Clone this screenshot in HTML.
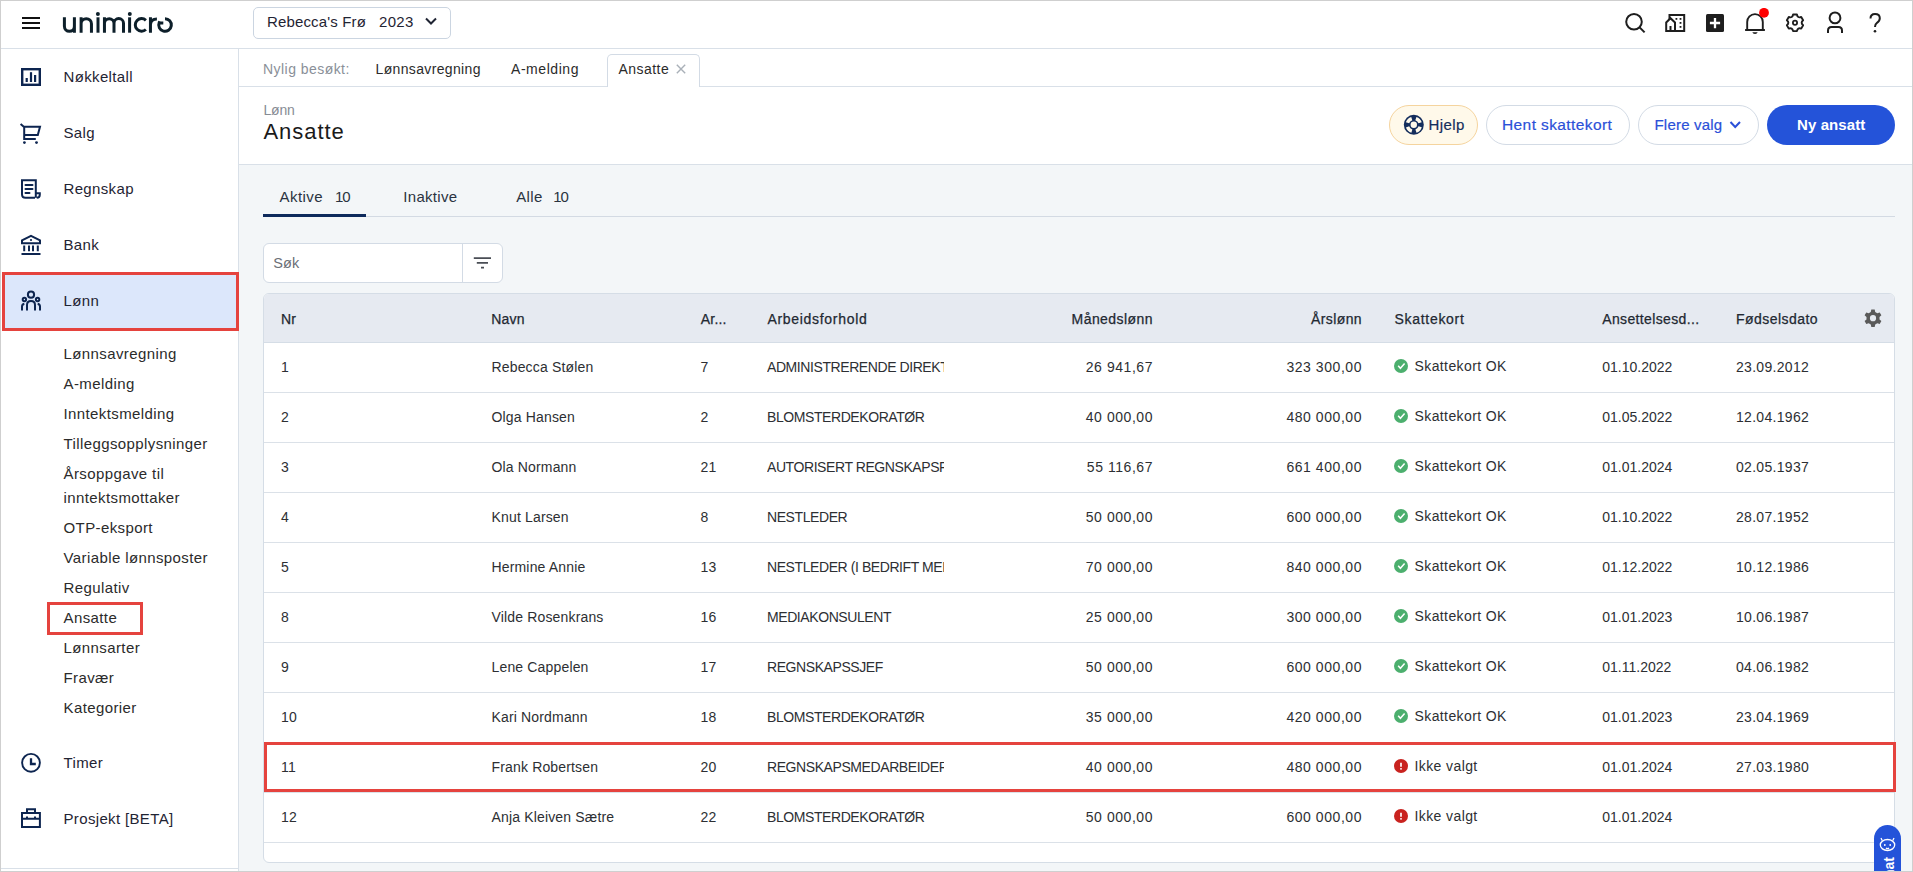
<!DOCTYPE html>
<html><head><meta charset="utf-8"><title>Ansatte</title>
<style>
html,body{margin:0;padding:0;}
body{width:1913px;height:872px;overflow:hidden;position:relative;background:#fff;font-family:"Liberation Sans", sans-serif;}
.t{position:absolute;white-space:nowrap;line-height:20px;height:20px;}
svg{display:block}
</style></head><body>
<div style="position:absolute;left:0;top:0;width:1913px;height:1px;background:#cfcfcf"></div><div style="position:absolute;left:0;top:0;width:1px;height:872px;background:#cfcfcf"></div><div style="position:absolute;left:1912px;top:0;width:1px;height:872px;background:#cfcfcf"></div><div style="position:absolute;left:0;top:871px;width:1913px;height:1px;background:#cfcfcf"></div><div style="position:absolute;left:1px;top:48px;width:1911px;height:1px;background:#d9e0e8"></div><div style="position:absolute;left:22px;top:17px;width:18px;height:2px;background:#111"></div><div style="position:absolute;left:22px;top:22px;width:18px;height:2px;background:#111"></div><div style="position:absolute;left:22px;top:27px;width:18px;height:2px;background:#111"></div><svg style="position:absolute;left:60px;top:8px" width="118" height="30" viewBox="60 8 118 30">
<g fill="none" stroke="#0d1f2a" stroke-width="3" stroke-linecap="butt">
<path d="M64.4 17.3 V26.3 A5 5 0 0 0 74.4 26.3 M74.4 17.3 V32.7"/>
<path d="M81.1 17.3 V32.7 M81.1 23.8 A5.17 5.17 0 0 1 91.45 23.8 V32.7"/>
<path d="M98 17.3 V32.7"/>
<path d="M104.45 17.3 V32.7 M104.45 23.3 A4.78 4.78 0 0 1 114 23.3 V32.7 M114 23.3 A4.75 4.75 0 0 1 123.5 23.3 V32.7"/>
<path d="M129.6 17.3 V32.7"/>
<path d="M145.9 20.3 A6.3 6.3 0 1 0 145.9 29.5"/>
<path d="M150.45 17.3 V32.7 M150.45 24.5 Q150.8 19 156.9 19"/>
<path d="M165 18.7 A6.3 6.3 0 1 1 159.2 22.6 Q160 22.9 163.3 23"/>
</g>
<circle cx="97.9" cy="13.9" r="2" fill="#0d1f2a"/>
<circle cx="129.8" cy="13.9" r="2" fill="#0d1f2a"/>
</svg><div style="position:absolute;left:253px;top:7px;width:196px;height:30px;border:1px solid #cbd5e1;border-radius:5px;background:#fff"></div><div class="t" style="left:267px;top:12.30px;font-size:15px;color:#1f2433;letter-spacing:0.15px;">Rebecca's Frø</div>
<div class="t" style="left:379px;top:12.30px;font-size:15px;color:#1f2433;letter-spacing:0.3px;">2023</div>
<svg style="position:absolute;left:424px;top:16px" width="14" height="10" viewBox="0 0 14 10"><path d="M2 2.5 L7 7.5 L12 2.5" fill="none" stroke="#1f2433" stroke-width="2"/></svg><svg style="position:absolute;left:1620px;top:8px" width="280" height="32" viewBox="1620 8 280 32">
<g fill="none" stroke="#1e1e1e" stroke-width="2">
<circle cx="1634" cy="21.8" r="7.8"/>
<path d="M1639.6 27.4 L1644.6 32.4"/>
<path d="M1666.2 31 V22.5 L1670.5 18.2 L1675 22.5 V31 Z M1670.5 31 V26"/>
<path d="M1669.5 19.5 V15 H1684.2 V31 H1666.2"/>
</g>
<g fill="#1e1e1e">
<rect x="1675.5" y="18" width="1.8" height="1.8"/><rect x="1679.6" y="18" width="1.8" height="1.8"/>
<rect x="1679.6" y="22" width="1.8" height="1.8"/><rect x="1679.6" y="26" width="1.8" height="1.8"/>
<rect x="1706" y="14" width="18" height="18" rx="1.5"/>
</g>
<path d="M1715 17.9 V28.2 M1709.9 23 H1720.1" stroke="#fff" stroke-width="2.3"/>
<g fill="none" stroke="#1e1e1e" stroke-width="2">
<path d="M1747.2 29.5 V21.95 A7.8 7.8 0 0 1 1762.8 21.95 V29.5" stroke-width="1.9"/>
<path d="M1745.1 30 H1764.9"/>
<circle cx="1795" cy="22.8" r="2.1" stroke-width="1.8"/>
<path d="M1793.09 14.52 L1796.91 14.52 Q1797.58 18.33 1801.22 17.00 L1803.13 20.31 Q1800.17 22.80 1803.13 25.29 L1801.22 28.60 Q1797.58 27.27 1796.91 31.08 L1793.09 31.08 Q1792.42 27.27 1788.78 28.60 L1786.87 25.29 Q1789.83 22.80 1786.87 20.31 L1788.78 17.00 Q1792.42 18.33 1793.09 14.52 Z" stroke-width="1.9" stroke-linejoin="round"/>
<circle cx="1835" cy="17.9" r="5.4"/>
<path d="M1828 33 V30.5 Q1828 27 1831.5 27 H1838.5 Q1842 27 1842 30.5 V33"/>
<path d="M1870.5 18.5 Q1870.5 14 1875 14 Q1879.8 14 1879.8 18.3 Q1879.8 21 1877 22.8 Q1875 24.2 1875 27"/>
</g>
<path d="M1752.3 32.2 H1757.7 Q1757.2 34 1755 34 Q1752.8 34 1752.3 32.2Z" fill="#1e1e1e"/>
<circle cx="1875" cy="31.3" r="1.3" fill="#1e1e1e"/>
<circle cx="1764" cy="12.8" r="4.9" fill="#ff0000"/>
</svg><div style="position:absolute;left:238px;top:49px;width:1px;height:822px;background:#d9e0e8"></div><div style="position:absolute;left:1px;top:868px;width:237px;height:1px;background:#d9e0e8"></div><div style="position:absolute;left:2px;top:272px;width:237px;height:59px;background:#dce7fb;box-sizing:border-box;border:3px solid #e5433e"></div><div class="t" style="left:63.5px;top:66.80px;font-size:15px;color:#1f2433;letter-spacing:0.35px;">Nøkkeltall</div>
<div class="t" style="left:63.5px;top:122.80px;font-size:15px;color:#1f2433;letter-spacing:0.35px;">Salg</div>
<div class="t" style="left:63.5px;top:178.80px;font-size:15px;color:#1f2433;letter-spacing:0.35px;">Regnskap</div>
<div class="t" style="left:63.5px;top:234.80px;font-size:15px;color:#1f2433;letter-spacing:0.35px;">Bank</div>
<div class="t" style="left:63.5px;top:290.80px;font-size:15px;color:#1f2433;letter-spacing:0.35px;">Lønn</div>
<div class="t" style="left:63.5px;top:752.80px;font-size:15px;color:#1f2433;letter-spacing:0.35px;">Timer</div>
<div class="t" style="left:63.5px;top:808.80px;font-size:15px;color:#1f2433;letter-spacing:0.35px;">Prosjekt [BETA]</div>
<svg style="position:absolute;left:14px;top:60px" width="34" height="780" viewBox="14 60 34 780">
<g fill="none" stroke="#0d2550" stroke-width="2.4">
<rect x="22.2" y="69.2" width="17.6" height="15.6"/>
</g>
<g fill="#0d2550">
<rect x="25.6" y="78" width="2.2" height="4"/><rect x="29.9" y="72.2" width="2.2" height="9.8"/><rect x="34" y="75" width="2.2" height="7"/>
</g>
<g fill="none" stroke="#0d2550" stroke-width="2" stroke-linejoin="miter">
<path d="M20.6 124 L23.8 126.8 H40 L37.8 134.9 H24.2 M24.2 126.8 V139 H35.8"/>
<path d="M35 197.8 H25.5 Q22 197.8 22 194.3 V180.2 H35.8 V197.8 M35.8 193.2 H39.8 V194.8 Q39.8 197.8 36.8 197.8"/>
<path d="M25.5 185 H32.5 M25.5 189 H32.5 M25.5 193 H29.5" stroke-linecap="round"/>
<path d="M22 243.2 V240.4 L31 235.8 L40 240.4 V243.2 Z"/>
<path d="M24.2 245.5 V251.3 M29 245.5 V251.3 M33 245.5 V251.3 M37.8 245.5 V251.3 M21.5 253.9 H40.5"/>
<path d="M27 310.5 V305 Q27 301 31 301 Q35 301 35 305 V310.5"/>
<path d="M22 310.5 V306.5 Q22 304.3 24.3 303.7"/>
<path d="M40 310.5 V306.5 Q40 304.3 37.7 303.7"/>
<circle cx="31" cy="294.7" r="3.1"/>
<circle cx="24.4" cy="299.5" r="1.7"/>
<circle cx="37.6" cy="299.5" r="1.7"/>
<circle cx="31" cy="762.8" r="8.9" stroke-width="1.9"/>
<path d="M31 758.2 V764 H35.8" stroke-width="2.3"/>
<rect x="22" y="813" width="17.9" height="14"/>
<path d="M27 813 V809.2 H35 V813 M22 818.8 H39.9 M27 816.5 V819 M35 816.5 V819"/>
</g>
<circle cx="24.4" cy="142.6" r="1.4" fill="#0d2550"/><circle cx="36.5" cy="142.6" r="1.4" fill="#0d2550"/>
<circle cx="31" cy="240" r="1.1" fill="#0d2550"/>
</svg><div class="t" style="left:63.5px;top:343.80px;font-size:15px;color:#2b2b2b;letter-spacing:0.4px;">Lønnsavregning</div>
<div class="t" style="left:63.5px;top:373.80px;font-size:15px;color:#2b2b2b;letter-spacing:0.4px;">A-melding</div>
<div class="t" style="left:63.5px;top:403.80px;font-size:15px;color:#2b2b2b;letter-spacing:0.4px;">Inntektsmelding</div>
<div class="t" style="left:63.5px;top:433.80px;font-size:15px;color:#2b2b2b;letter-spacing:0.4px;">Tilleggsopplysninger</div>
<div class="t" style="left:63.5px;top:463.80px;font-size:15px;color:#2b2b2b;letter-spacing:0.4px;">Årsoppgave til</div>
<div class="t" style="left:63.5px;top:487.80px;font-size:15px;color:#2b2b2b;letter-spacing:0.4px;">inntektsmottaker</div>
<div class="t" style="left:63.5px;top:517.80px;font-size:15px;color:#2b2b2b;letter-spacing:0.4px;">OTP-eksport</div>
<div class="t" style="left:63.5px;top:547.80px;font-size:15px;color:#2b2b2b;letter-spacing:0.4px;">Variable lønnsposter</div>
<div class="t" style="left:63.5px;top:577.80px;font-size:15px;color:#2b2b2b;letter-spacing:0.4px;">Regulativ</div>
<div class="t" style="left:63.5px;top:607.80px;font-size:15px;color:#2b2b2b;letter-spacing:0.4px;">Ansatte</div>
<div class="t" style="left:63.5px;top:637.80px;font-size:15px;color:#2b2b2b;letter-spacing:0.4px;">Lønnsarter</div>
<div class="t" style="left:63.5px;top:667.80px;font-size:15px;color:#2b2b2b;letter-spacing:0.4px;">Fravær</div>
<div class="t" style="left:63.5px;top:697.80px;font-size:15px;color:#2b2b2b;letter-spacing:0.4px;">Kategorier</div>
<div style="position:absolute;left:47px;top:602px;width:96px;height:33px;box-sizing:border-box;border:3px solid #e5433e"></div><div style="position:absolute;left:239px;top:86px;width:1673px;height:1px;background:#d9e0e8"></div><div class="t" style="left:263px;top:59.15px;font-size:14px;color:#8a8f98;letter-spacing:0.45px;">Nylig besøkt:</div>
<div class="t" style="left:375.5px;top:59.15px;font-size:14px;color:#2b2b2b;letter-spacing:0.35px;">Lønnsavregning</div>
<div class="t" style="left:511px;top:59.15px;font-size:14px;color:#2b2b2b;letter-spacing:0.55px;">A-melding</div>
<div style="position:absolute;left:607px;top:54px;width:93px;height:33px;box-sizing:border-box;border:1px solid #d3dbe5;border-bottom:none;border-radius:5px 5px 0 0;background:#fff"></div><div class="t" style="left:618.5px;top:59.15px;font-size:14px;color:#2b2b2b;letter-spacing:0.45px;">Ansatte</div>
<svg style="position:absolute;left:675px;top:63px" width="12" height="12" viewBox="0 0 12 12"><path d="M1.8 1.8 L10.2 10.2 M10.2 1.8 L1.8 10.2" stroke="#a9b0b8" stroke-width="1.4"/></svg><div style="position:absolute;left:239px;top:164px;width:1673px;height:1px;background:#d9e0e8"></div><div class="t" style="left:263.5px;top:100.15px;font-size:14px;color:#878c94;letter-spacing:-0.2px;">Lønn</div>
<div class="t" style="left:263.5px;top:122.38px;font-size:22px;color:#1a1a1a;letter-spacing:0.95px;">Ansatte</div>
<div style="position:absolute;left:1389px;top:105px;width:89px;height:40px;box-sizing:border-box;border:1px solid #f5d49e;border-radius:20px;background:#fff9ea"></div><svg style="position:absolute;left:1403px;top:114px" width="22" height="22" viewBox="1403 114 22 22">
<circle cx="1413.8" cy="124.8" r="10" fill="#142d5c"/>
<circle cx="1413.8" cy="124.8" r="6.6" fill="none" stroke="#fff9ea" stroke-width="3.4" stroke-dasharray="6.2 4.17" stroke-dashoffset="-1.9"/>
<circle cx="1413.8" cy="124.8" r="3.2" fill="#fff9ea"/>
</svg><div class="t" style="left:1428.5px;top:115.30px;font-size:15px;color:#142d5c;letter-spacing:0.4px;-webkit-text-stroke:0.2px #142d5c;">Hjelp</div>
<div style="position:absolute;left:1486px;top:105px;width:144px;height:40px;box-sizing:border-box;border:1px solid #d3dbe5;border-radius:20px;background:#fff"></div><div class="t" style="left:1502px;top:115.13px;font-size:15.5px;color:#2b50d8;letter-spacing:0.4px;-webkit-text-stroke:0.2px #2b50d8;">Hent skattekort</div>
<div style="position:absolute;left:1638px;top:105px;width:121px;height:40px;box-sizing:border-box;border:1px solid #d3dbe5;border-radius:20px;background:#fff"></div><div class="t" style="left:1654.5px;top:115.30px;font-size:15px;color:#2b50d8;letter-spacing:0.2px;-webkit-text-stroke:0.2px #2b50d8;">Flere valg</div>
<svg style="position:absolute;left:1728px;top:119px" width="14" height="12" viewBox="0 0 14 12"><path d="M2.5 3 L7.2 8 L12 3" fill="none" stroke="#2b50d8" stroke-width="2"/></svg><div style="position:absolute;left:1767px;top:105px;width:128px;height:40px;border-radius:20px;background:#2453d9"></div><div class="t" style="left:1797px;top:115.30px;font-size:15px;color:#ffffff;font-weight:700;letter-spacing:0.1px;">Ny ansatt</div>
<div style="position:absolute;left:239px;top:165px;width:1673px;height:706px;background:#f3f6f8"></div><div style="position:absolute;left:263px;top:216px;width:1632px;height:1px;background:#d3dae3"></div><div style="position:absolute;left:263px;top:214px;width:103px;height:3px;background:#0e2a5c"></div><div class="t" style="left:279.5px;top:186.80px;font-size:15px;color:#2a3340;letter-spacing:0.45px;">Aktive</div>
<div class="t" style="left:335px;top:186.80px;font-size:15px;color:#2a3340;letter-spacing:-1.2px;">10</div>
<div class="t" style="left:403.3px;top:186.80px;font-size:15px;color:#2a3340;letter-spacing:0.3px;">Inaktive</div>
<div class="t" style="left:516.2px;top:186.80px;font-size:15px;color:#2a3340;letter-spacing:0.4px;">Alle</div>
<div class="t" style="left:553.3px;top:186.80px;font-size:15px;color:#2a3340;letter-spacing:-1.2px;">10</div>
<div style="position:absolute;left:263px;top:243px;width:240px;height:40px;box-sizing:border-box;border:1px solid #d3dbe5;border-radius:6px;background:#fff"></div><div style="position:absolute;left:462px;top:244px;width:1px;height:38px;background:#d3dbe5"></div><div class="t" style="left:273.3px;top:252.98px;font-size:14.5px;color:#6b6f76;letter-spacing:0.05px;">Søk</div>
<svg style="position:absolute;left:472px;top:255px" width="22" height="16" viewBox="472 255 22 16"><path d="M473.8 258.1 H491 M476.8 262.9 H488 M481 267.6 H484" stroke="#4a4e55" stroke-width="1.6"/></svg><div style="position:absolute;left:263px;top:293px;width:1632px;height:570px;box-sizing:border-box;border:1px solid #d5dde6;border-radius:6px;background:#fff;overflow:hidden"><div style="position:absolute;left:0;top:0;width:100%;height:48px;background:#e6eaf1;border-bottom:1px solid #d5dde6"></div><div style="position:absolute;left:0;top:98px;width:100%;height:1px;background:#dbe1e8"></div><div style="position:absolute;left:0;top:148px;width:100%;height:1px;background:#dbe1e8"></div><div style="position:absolute;left:0;top:198px;width:100%;height:1px;background:#dbe1e8"></div><div style="position:absolute;left:0;top:248px;width:100%;height:1px;background:#dbe1e8"></div><div style="position:absolute;left:0;top:298px;width:100%;height:1px;background:#dbe1e8"></div><div style="position:absolute;left:0;top:348px;width:100%;height:1px;background:#dbe1e8"></div><div style="position:absolute;left:0;top:398px;width:100%;height:1px;background:#dbe1e8"></div><div style="position:absolute;left:0;top:448px;width:100%;height:1px;background:#dbe1e8"></div><div style="position:absolute;left:0;top:498px;width:100%;height:1px;background:#dbe1e8"></div><div style="position:absolute;left:0;top:548px;width:100%;height:1px;background:#dbe1e8"></div></div><div class="t" style="left:281px;top:309.15px;font-size:14px;color:#222831;letter-spacing:0.2px;-webkit-text-stroke:0.25px #222831;">Nr</div>
<div class="t" style="left:491.3px;top:309.15px;font-size:14px;color:#222831;letter-spacing:0.2px;-webkit-text-stroke:0.25px #222831;">Navn</div>
<div class="t" style="left:700.8px;top:309.15px;font-size:14px;color:#222831;letter-spacing:0.2px;-webkit-text-stroke:0.25px #222831;">Ar...</div>
<div class="t" style="left:767.4px;top:309.15px;font-size:14px;color:#222831;letter-spacing:0.7px;-webkit-text-stroke:0.25px #222831;">Arbeidsforhold</div>
<div class="t" style="right:760px;text-align:right;top:309.15px;font-size:14px;color:#222831;letter-spacing:0.44px;-webkit-text-stroke:0.25px #222831;">Månedslønn</div>
<div class="t" style="right:551px;text-align:right;top:309.15px;font-size:14px;color:#222831;letter-spacing:0.38px;-webkit-text-stroke:0.25px #222831;">Årslønn</div>
<div class="t" style="left:1394.5px;top:309.15px;font-size:14px;color:#222831;letter-spacing:0.7px;-webkit-text-stroke:0.25px #222831;">Skattekort</div>
<div class="t" style="left:1602.3px;top:309.15px;font-size:14px;color:#222831;letter-spacing:0.35px;-webkit-text-stroke:0.25px #222831;">Ansettelsesd...</div>
<div class="t" style="left:1736px;top:309.15px;font-size:14px;color:#222831;letter-spacing:0.45px;-webkit-text-stroke:0.25px #222831;">Fødselsdato</div>
<svg style="position:absolute;left:1862px;top:307px" width="22" height="22" viewBox="1862 307 22 22">
<path fill="#5a5a5a" fill-rule="evenodd" d="M1871.3 309.5 H1874.7 L1875.2 312 L1877.3 313.2 L1879.7 312.4 L1881.4 315.3 L1879.5 317 V319.4 L1881.4 321.1 L1879.7 324 L1877.3 323.2 L1875.2 324.4 L1874.7 326.9 H1871.3 L1870.8 324.4 L1868.7 323.2 L1866.3 324 L1864.6 321.1 L1866.5 319.4 V317 L1864.6 315.3 L1866.3 312.4 L1868.7 313.2 L1870.8 312 Z M1873 315.1 A3.1 3.1 0 1 0 1873 321.3 A3.1 3.1 0 1 0 1873 315.1 Z"/>
</svg><div class="t" style="left:281px;top:357.15px;font-size:14px;color:#2d2f33;letter-spacing:0.3px;">1</div>
<div class="t" style="left:491.5px;top:357.15px;font-size:14px;color:#2d2f33;letter-spacing:0.16px;">Rebecca Stølen</div>
<div class="t" style="left:700.5px;top:357.15px;font-size:14px;color:#2d2f33;letter-spacing:0.3px;">7</div>
<div style="position:absolute;left:767px;top:342px;width:177px;height:40px;overflow:hidden"><div class="t" style="left:0px;top:15.15px;font-size:14px;color:#2d2f33;letter-spacing:-0.42px;">ADMINISTRERENDE DIREKTØR</div>
</div><div class="t" style="right:760px;text-align:right;top:357.15px;font-size:14px;color:#2d2f33;letter-spacing:0.55px;">26 941,67</div>
<div class="t" style="right:551px;text-align:right;top:357.15px;font-size:14px;color:#2d2f33;letter-spacing:0.55px;">323 300,00</div>
<svg style="position:absolute;left:1393px;top:358px" width="16" height="16" viewBox="0 0 16 16"><circle cx="8" cy="8" r="7" fill="#4caf6e"/><path d="M5.2 7.7 L7.4 10.3 L11.6 5.4" fill="none" stroke="#fff" stroke-width="1.5"/></svg><div class="t" style="left:1414.5px;top:355.95px;font-size:14px;color:#2d2f33;letter-spacing:0.4px;">Skattekort OK</div>
<div class="t" style="left:1602.3px;top:357.15px;font-size:14px;color:#2d2f33;letter-spacing:0.0px;">01.10.2022</div>
<div class="t" style="left:1736px;top:357.15px;font-size:14px;color:#2d2f33;letter-spacing:0.3px;">23.09.2012</div>
<div class="t" style="left:281px;top:407.15px;font-size:14px;color:#2d2f33;letter-spacing:0.3px;">2</div>
<div class="t" style="left:491.5px;top:407.15px;font-size:14px;color:#2d2f33;letter-spacing:0.16px;">Olga Hansen</div>
<div class="t" style="left:700.5px;top:407.15px;font-size:14px;color:#2d2f33;letter-spacing:0.3px;">2</div>
<div style="position:absolute;left:767px;top:392px;width:177px;height:40px;overflow:hidden"><div class="t" style="left:0px;top:15.15px;font-size:14px;color:#2d2f33;letter-spacing:-0.42px;">BLOMSTERDEKORATØR</div>
</div><div class="t" style="right:760px;text-align:right;top:407.15px;font-size:14px;color:#2d2f33;letter-spacing:0.55px;">40 000,00</div>
<div class="t" style="right:551px;text-align:right;top:407.15px;font-size:14px;color:#2d2f33;letter-spacing:0.55px;">480 000,00</div>
<svg style="position:absolute;left:1393px;top:408px" width="16" height="16" viewBox="0 0 16 16"><circle cx="8" cy="8" r="7" fill="#4caf6e"/><path d="M5.2 7.7 L7.4 10.3 L11.6 5.4" fill="none" stroke="#fff" stroke-width="1.5"/></svg><div class="t" style="left:1414.5px;top:405.95px;font-size:14px;color:#2d2f33;letter-spacing:0.4px;">Skattekort OK</div>
<div class="t" style="left:1602.3px;top:407.15px;font-size:14px;color:#2d2f33;letter-spacing:0.0px;">01.05.2022</div>
<div class="t" style="left:1736px;top:407.15px;font-size:14px;color:#2d2f33;letter-spacing:0.3px;">12.04.1962</div>
<div class="t" style="left:281px;top:457.15px;font-size:14px;color:#2d2f33;letter-spacing:0.3px;">3</div>
<div class="t" style="left:491.5px;top:457.15px;font-size:14px;color:#2d2f33;letter-spacing:0.16px;">Ola Normann</div>
<div class="t" style="left:700.5px;top:457.15px;font-size:14px;color:#2d2f33;letter-spacing:0.3px;">21</div>
<div style="position:absolute;left:767px;top:442px;width:177px;height:40px;overflow:hidden"><div class="t" style="left:0px;top:15.15px;font-size:14px;color:#2d2f33;letter-spacing:-0.42px;">AUTORISERT REGNSKAPSFØRER</div>
</div><div class="t" style="right:760px;text-align:right;top:457.15px;font-size:14px;color:#2d2f33;letter-spacing:0.55px;">55 116,67</div>
<div class="t" style="right:551px;text-align:right;top:457.15px;font-size:14px;color:#2d2f33;letter-spacing:0.55px;">661 400,00</div>
<svg style="position:absolute;left:1393px;top:458px" width="16" height="16" viewBox="0 0 16 16"><circle cx="8" cy="8" r="7" fill="#4caf6e"/><path d="M5.2 7.7 L7.4 10.3 L11.6 5.4" fill="none" stroke="#fff" stroke-width="1.5"/></svg><div class="t" style="left:1414.5px;top:455.95px;font-size:14px;color:#2d2f33;letter-spacing:0.4px;">Skattekort OK</div>
<div class="t" style="left:1602.3px;top:457.15px;font-size:14px;color:#2d2f33;letter-spacing:0.0px;">01.01.2024</div>
<div class="t" style="left:1736px;top:457.15px;font-size:14px;color:#2d2f33;letter-spacing:0.3px;">02.05.1937</div>
<div class="t" style="left:281px;top:507.15px;font-size:14px;color:#2d2f33;letter-spacing:0.3px;">4</div>
<div class="t" style="left:491.5px;top:507.15px;font-size:14px;color:#2d2f33;letter-spacing:0.16px;">Knut Larsen</div>
<div class="t" style="left:700.5px;top:507.15px;font-size:14px;color:#2d2f33;letter-spacing:0.3px;">8</div>
<div style="position:absolute;left:767px;top:492px;width:177px;height:40px;overflow:hidden"><div class="t" style="left:0px;top:15.15px;font-size:14px;color:#2d2f33;letter-spacing:-0.42px;">NESTLEDER</div>
</div><div class="t" style="right:760px;text-align:right;top:507.15px;font-size:14px;color:#2d2f33;letter-spacing:0.55px;">50 000,00</div>
<div class="t" style="right:551px;text-align:right;top:507.15px;font-size:14px;color:#2d2f33;letter-spacing:0.55px;">600 000,00</div>
<svg style="position:absolute;left:1393px;top:508px" width="16" height="16" viewBox="0 0 16 16"><circle cx="8" cy="8" r="7" fill="#4caf6e"/><path d="M5.2 7.7 L7.4 10.3 L11.6 5.4" fill="none" stroke="#fff" stroke-width="1.5"/></svg><div class="t" style="left:1414.5px;top:505.95px;font-size:14px;color:#2d2f33;letter-spacing:0.4px;">Skattekort OK</div>
<div class="t" style="left:1602.3px;top:507.15px;font-size:14px;color:#2d2f33;letter-spacing:0.0px;">01.10.2022</div>
<div class="t" style="left:1736px;top:507.15px;font-size:14px;color:#2d2f33;letter-spacing:0.3px;">28.07.1952</div>
<div class="t" style="left:281px;top:557.15px;font-size:14px;color:#2d2f33;letter-spacing:0.3px;">5</div>
<div class="t" style="left:491.5px;top:557.15px;font-size:14px;color:#2d2f33;letter-spacing:0.16px;">Hermine Annie</div>
<div class="t" style="left:700.5px;top:557.15px;font-size:14px;color:#2d2f33;letter-spacing:0.3px;">13</div>
<div style="position:absolute;left:767px;top:542px;width:177px;height:40px;overflow:hidden"><div class="t" style="left:0px;top:15.15px;font-size:14px;color:#2d2f33;letter-spacing:-0.42px;">NESTLEDER (I BEDRIFT MED</div>
</div><div class="t" style="right:760px;text-align:right;top:557.15px;font-size:14px;color:#2d2f33;letter-spacing:0.55px;">70 000,00</div>
<div class="t" style="right:551px;text-align:right;top:557.15px;font-size:14px;color:#2d2f33;letter-spacing:0.55px;">840 000,00</div>
<svg style="position:absolute;left:1393px;top:558px" width="16" height="16" viewBox="0 0 16 16"><circle cx="8" cy="8" r="7" fill="#4caf6e"/><path d="M5.2 7.7 L7.4 10.3 L11.6 5.4" fill="none" stroke="#fff" stroke-width="1.5"/></svg><div class="t" style="left:1414.5px;top:555.95px;font-size:14px;color:#2d2f33;letter-spacing:0.4px;">Skattekort OK</div>
<div class="t" style="left:1602.3px;top:557.15px;font-size:14px;color:#2d2f33;letter-spacing:0.0px;">01.12.2022</div>
<div class="t" style="left:1736px;top:557.15px;font-size:14px;color:#2d2f33;letter-spacing:0.3px;">10.12.1986</div>
<div class="t" style="left:281px;top:607.15px;font-size:14px;color:#2d2f33;letter-spacing:0.3px;">8</div>
<div class="t" style="left:491.5px;top:607.15px;font-size:14px;color:#2d2f33;letter-spacing:0.16px;">Vilde Rosenkrans</div>
<div class="t" style="left:700.5px;top:607.15px;font-size:14px;color:#2d2f33;letter-spacing:0.3px;">16</div>
<div style="position:absolute;left:767px;top:592px;width:177px;height:40px;overflow:hidden"><div class="t" style="left:0px;top:15.15px;font-size:14px;color:#2d2f33;letter-spacing:-0.42px;">MEDIAKONSULENT</div>
</div><div class="t" style="right:760px;text-align:right;top:607.15px;font-size:14px;color:#2d2f33;letter-spacing:0.55px;">25 000,00</div>
<div class="t" style="right:551px;text-align:right;top:607.15px;font-size:14px;color:#2d2f33;letter-spacing:0.55px;">300 000,00</div>
<svg style="position:absolute;left:1393px;top:608px" width="16" height="16" viewBox="0 0 16 16"><circle cx="8" cy="8" r="7" fill="#4caf6e"/><path d="M5.2 7.7 L7.4 10.3 L11.6 5.4" fill="none" stroke="#fff" stroke-width="1.5"/></svg><div class="t" style="left:1414.5px;top:605.95px;font-size:14px;color:#2d2f33;letter-spacing:0.4px;">Skattekort OK</div>
<div class="t" style="left:1602.3px;top:607.15px;font-size:14px;color:#2d2f33;letter-spacing:0.0px;">01.01.2023</div>
<div class="t" style="left:1736px;top:607.15px;font-size:14px;color:#2d2f33;letter-spacing:0.3px;">10.06.1987</div>
<div class="t" style="left:281px;top:657.15px;font-size:14px;color:#2d2f33;letter-spacing:0.3px;">9</div>
<div class="t" style="left:491.5px;top:657.15px;font-size:14px;color:#2d2f33;letter-spacing:0.16px;">Lene Cappelen</div>
<div class="t" style="left:700.5px;top:657.15px;font-size:14px;color:#2d2f33;letter-spacing:0.3px;">17</div>
<div style="position:absolute;left:767px;top:642px;width:177px;height:40px;overflow:hidden"><div class="t" style="left:0px;top:15.15px;font-size:14px;color:#2d2f33;letter-spacing:-0.42px;">REGNSKAPSSJEF</div>
</div><div class="t" style="right:760px;text-align:right;top:657.15px;font-size:14px;color:#2d2f33;letter-spacing:0.55px;">50 000,00</div>
<div class="t" style="right:551px;text-align:right;top:657.15px;font-size:14px;color:#2d2f33;letter-spacing:0.55px;">600 000,00</div>
<svg style="position:absolute;left:1393px;top:658px" width="16" height="16" viewBox="0 0 16 16"><circle cx="8" cy="8" r="7" fill="#4caf6e"/><path d="M5.2 7.7 L7.4 10.3 L11.6 5.4" fill="none" stroke="#fff" stroke-width="1.5"/></svg><div class="t" style="left:1414.5px;top:655.95px;font-size:14px;color:#2d2f33;letter-spacing:0.4px;">Skattekort OK</div>
<div class="t" style="left:1602.3px;top:657.15px;font-size:14px;color:#2d2f33;letter-spacing:0.0px;">01.11.2022</div>
<div class="t" style="left:1736px;top:657.15px;font-size:14px;color:#2d2f33;letter-spacing:0.3px;">04.06.1982</div>
<div class="t" style="left:281px;top:707.15px;font-size:14px;color:#2d2f33;letter-spacing:0.3px;">10</div>
<div class="t" style="left:491.5px;top:707.15px;font-size:14px;color:#2d2f33;letter-spacing:0.16px;">Kari Nordmann</div>
<div class="t" style="left:700.5px;top:707.15px;font-size:14px;color:#2d2f33;letter-spacing:0.3px;">18</div>
<div style="position:absolute;left:767px;top:692px;width:177px;height:40px;overflow:hidden"><div class="t" style="left:0px;top:15.15px;font-size:14px;color:#2d2f33;letter-spacing:-0.42px;">BLOMSTERDEKORATØR</div>
</div><div class="t" style="right:760px;text-align:right;top:707.15px;font-size:14px;color:#2d2f33;letter-spacing:0.55px;">35 000,00</div>
<div class="t" style="right:551px;text-align:right;top:707.15px;font-size:14px;color:#2d2f33;letter-spacing:0.55px;">420 000,00</div>
<svg style="position:absolute;left:1393px;top:708px" width="16" height="16" viewBox="0 0 16 16"><circle cx="8" cy="8" r="7" fill="#4caf6e"/><path d="M5.2 7.7 L7.4 10.3 L11.6 5.4" fill="none" stroke="#fff" stroke-width="1.5"/></svg><div class="t" style="left:1414.5px;top:705.95px;font-size:14px;color:#2d2f33;letter-spacing:0.4px;">Skattekort OK</div>
<div class="t" style="left:1602.3px;top:707.15px;font-size:14px;color:#2d2f33;letter-spacing:0.0px;">01.01.2023</div>
<div class="t" style="left:1736px;top:707.15px;font-size:14px;color:#2d2f33;letter-spacing:0.3px;">23.04.1969</div>
<div class="t" style="left:281px;top:757.15px;font-size:14px;color:#2d2f33;letter-spacing:0.3px;">11</div>
<div class="t" style="left:491.5px;top:757.15px;font-size:14px;color:#2d2f33;letter-spacing:0.16px;">Frank Robertsen</div>
<div class="t" style="left:700.5px;top:757.15px;font-size:14px;color:#2d2f33;letter-spacing:0.3px;">20</div>
<div style="position:absolute;left:767px;top:742px;width:177px;height:40px;overflow:hidden"><div class="t" style="left:0px;top:15.15px;font-size:14px;color:#2d2f33;letter-spacing:-0.42px;">REGNSKAPSMEDARBEIDER</div>
</div><div class="t" style="right:760px;text-align:right;top:757.15px;font-size:14px;color:#2d2f33;letter-spacing:0.55px;">40 000,00</div>
<div class="t" style="right:551px;text-align:right;top:757.15px;font-size:14px;color:#2d2f33;letter-spacing:0.55px;">480 000,00</div>
<svg style="position:absolute;left:1393px;top:758px" width="16" height="16" viewBox="0 0 16 16"><circle cx="8" cy="8" r="7" fill="#c9231f"/><path d="M8 4.7 V8.8" stroke="#fff" stroke-width="1.7"/><rect x="7.15" y="10.1" width="1.7" height="1.5" fill="#fff"/></svg><div class="t" style="left:1414.5px;top:755.95px;font-size:14px;color:#2d2f33;letter-spacing:0.4px;">Ikke valgt</div>
<div class="t" style="left:1602.3px;top:757.15px;font-size:14px;color:#2d2f33;letter-spacing:0.0px;">01.01.2024</div>
<div class="t" style="left:1736px;top:757.15px;font-size:14px;color:#2d2f33;letter-spacing:0.3px;">27.03.1980</div>
<div class="t" style="left:281px;top:807.15px;font-size:14px;color:#2d2f33;letter-spacing:0.3px;">12</div>
<div class="t" style="left:491.5px;top:807.15px;font-size:14px;color:#2d2f33;letter-spacing:0.16px;">Anja Kleiven Sætre</div>
<div class="t" style="left:700.5px;top:807.15px;font-size:14px;color:#2d2f33;letter-spacing:0.3px;">22</div>
<div style="position:absolute;left:767px;top:792px;width:177px;height:40px;overflow:hidden"><div class="t" style="left:0px;top:15.15px;font-size:14px;color:#2d2f33;letter-spacing:-0.42px;">BLOMSTERDEKORATØR</div>
</div><div class="t" style="right:760px;text-align:right;top:807.15px;font-size:14px;color:#2d2f33;letter-spacing:0.55px;">50 000,00</div>
<div class="t" style="right:551px;text-align:right;top:807.15px;font-size:14px;color:#2d2f33;letter-spacing:0.55px;">600 000,00</div>
<svg style="position:absolute;left:1393px;top:808px" width="16" height="16" viewBox="0 0 16 16"><circle cx="8" cy="8" r="7" fill="#c9231f"/><path d="M8 4.7 V8.8" stroke="#fff" stroke-width="1.7"/><rect x="7.15" y="10.1" width="1.7" height="1.5" fill="#fff"/></svg><div class="t" style="left:1414.5px;top:805.95px;font-size:14px;color:#2d2f33;letter-spacing:0.4px;">Ikke valgt</div>
<div class="t" style="left:1602.3px;top:807.15px;font-size:14px;color:#2d2f33;letter-spacing:0.0px;">01.01.2024</div>
<div style="position:absolute;left:264px;top:742px;width:1632px;height:50px;box-sizing:border-box;border:3px solid #e5433e"></div><div style="position:absolute;left:1874px;top:825px;width:27px;height:46px;background:#2453d9;border-radius:13.5px 13.5px 0 0;overflow:hidden">
<svg style="position:absolute;left:0;top:0" width="27" height="46" viewBox="1874 825 27 46">
<g fill="none" stroke="#fff" stroke-width="1.3">
<ellipse cx="1887.5" cy="845" rx="7.2" ry="5.5"/>
<path d="M1882.2 840.5 L1881 838 M1892.8 840.5 L1894 838"/>
<path d="M1886 848 Q1887.5 849.3 1889 848"/>
</g>
<circle cx="1884.8" cy="845" r="0.9" fill="#fff"/><circle cx="1890.2" cy="845" r="0.9" fill="#fff"/>
</svg>
<div style="position:absolute;left:-5.5px;top:44px;width:40px;height:16px;transform:rotate(-90deg);transform-origin:center;font-family:'Liberation Sans',sans-serif;font-weight:700;font-size:14px;line-height:16px;color:#fff;text-align:right">Chat</div>
</div>
</body></html>
